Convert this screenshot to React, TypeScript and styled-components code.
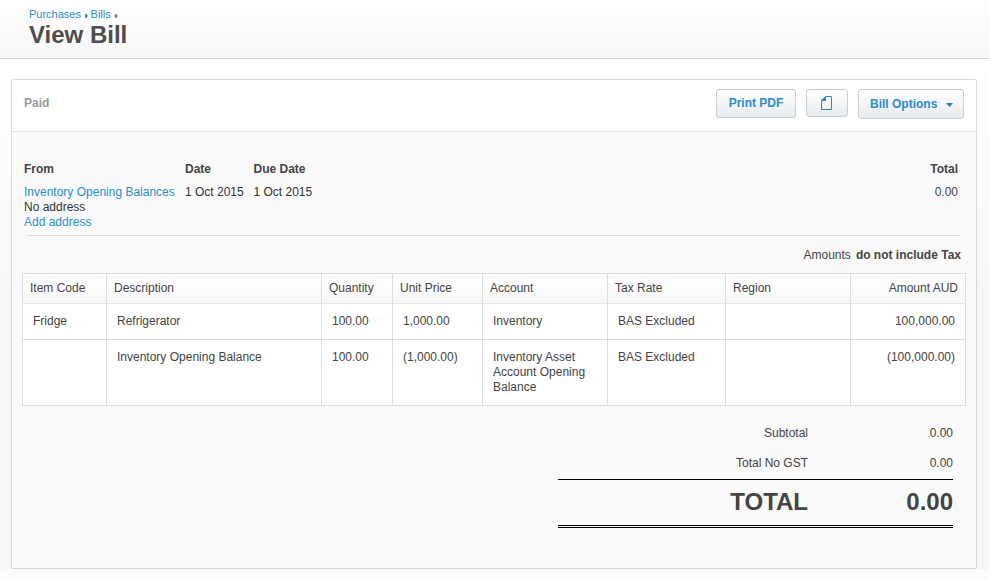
import React from "react";
import styled, { createGlobalStyle } from "styled-components";

const GlobalStyle = createGlobalStyle`
  * { box-sizing: border-box; }
  body {
    margin: 0;
    background: #fcfcfc;
    color: #444;
    font: 12px/15px "Liberation Sans", Arial, Helvetica, sans-serif;
  }
  h1, p { margin: 0; }
`;

const Page = styled.div`
  height: 580px;
  overflow: hidden;
`;

const Header = styled.header`
  height: 59px;
  padding: 7px 29px 0;
  border-bottom: 1px solid #d8d8d8;
  background: linear-gradient(#fff, #f7f7f7);
`;

const Breadcrumb = styled.nav`
  display: flex;
  align-items: center;
  height: 15px;
  font-size: 11px;
`;

const Chevron = styled.svg`
  width: 3px;
  height: 4px;
  margin: 2px 2.6px 0 4px;
  fill: #777;
`;

const Title = styled.h1`
  font-size: 24px;
  line-height: 26px;
  color: #4d4d4d;
`;

const Link = styled.a`
  color: #2a8fca;
  text-decoration: none;
  cursor: pointer;
`;

const Main = styled.main`
  height: 510px;
  padding: 20px 12px 0 11px;
  background: linear-gradient(#fff, #f7f7f7 240px);
`;

const Panel = styled.section`
  height: 490px;
  border: 1px solid #d9d9d9;
  border-radius: 3px 3px 0 0;
  background: #fafafa;
`;

const Toolbar = styled.div`
  display: flex;
  align-items: flex-start;
  height: 52px;
  padding: 9px 12px 0;
  border-bottom: 1px solid #e4e4e4;
  border-radius: 2px 2px 0 0;
  background: #fff;
`;

const Status = styled.strong`
  flex: 1;
  padding-top: 7px;
  color: #999;
`;

const Button = styled.button<{ $width: number; $height: number }>`
  display: flex;
  align-items: center;
  justify-content: center;
  width: ${(p) => p.$width}px;
  height: ${(p) => p.$height}px;
  margin-left: 10px;
  padding: 0 0 1px;
  border: 1px solid #c9cfd4;
  border-radius: 3px;
  background: linear-gradient(#fff, #e7ebee);
  color: #2a8fca;
  font: bold 12px/15px "Liberation Sans", Arial, sans-serif;
`;

const MenuButton = styled(Button)`
  justify-content: space-between;
  padding: 1px 10px 0 11px;
`;

const PageIcon = styled.svg`
  width: 11px;
  height: 14px;
  margin: 1px 1px 0 0;
`;

const Caret = styled.svg`
  width: 7px;
  height: 4px;
  margin-top: 1px;
  fill: #2a7fb5;
`;

const Summary = styled.div`
  display: grid;
  grid-template-columns: 161px 68.5px 1fr auto;
  row-gap: 8px;
  align-content: start;
  height: 104px;
  margin: 0 15px 0 12px;
  padding: 30px 3px 0 0;
`;

const Heading = styled.strong<{ $right?: boolean }>`
  text-align: ${(p) => (p.$right ? "right" : "left")};
`;

const Value = styled.div<{ $right?: boolean }>`
  color: ${(p) => (p.$right ? "#444" : "#333")};
  text-align: ${(p) => (p.$right ? "right" : "left")};
`;

const Divider = styled.div`
  height: 1px;
  margin: -1px 15px 0 15px;
  background: #ddd;
`;

const TaxNote = styled.p`
  display: flex;
  justify-content: flex-end;
  gap: 5px;
  height: 37px;
  padding: 12px 15px 0 0;
`;

const Table = styled.div`
  width: 944px;
  margin-left: 10px;
  border: solid #ddd;
  border-width: 1px 0 0 1px;
  background: #fff;
`;

const Row = styled.div<{ $height: number; $head?: boolean }>`
  display: grid;
  grid-template-columns: 84px 215px 71px 90px 125px 118px 125px 115px;
  height: ${(p) => p.$height}px;
  background: ${(p) => (p.$head ? "linear-gradient(#fff, #f8f8f8)" : "#fff")};
`;

const Cell = styled.div<{ $head?: boolean }>`
  padding: ${(p) => (p.$head ? "7px 7px" : "10px 10px")};
  border: solid #ddd;
  border-width: 0 1px 1px 0;
  border-bottom-color: ${(p) => (p.$head ? "#e6e6e6" : "#ddd")};

  &:last-child { text-align: right; }
`;

const Totals = styled.div`
  width: 395px;
  margin: 12px 0 0 546px;
`;

const TotalRow = styled.div<{ $grand?: boolean }>`
  display: grid;
  grid-template-columns: 250px 145px;
  align-items: center;
  height: ${(p) => (p.$grand ? 49 : 30)}px;
  margin-top: ${(p) => (p.$grand ? 1 : 0)}px;
  padding-bottom: ${(p) => (p.$grand ? 1 : 0)}px;
  border-top: ${(p) => (p.$grand ? "1px solid #000" : "0")};
  border-bottom: ${(p) => (p.$grand ? "3px double #000" : "0")};
  font-size: ${(p) => (p.$grand ? 24 : 12)}px;
  font-weight: ${(p) => (p.$grand ? "bold" : "normal")};
  line-height: ${(p) => (p.$grand ? 28 : 15)}px;
  text-align: right;
`;

const columns = ["Item Code", "Description", "Quantity", "Unit Price", "Account", "Tax Rate", "Region", "Amount AUD"];

const items = [
  { height: 36, cells: ["Fridge", "Refrigerator", "100.00", "1,000.00", "Inventory", "BAS Excluded", "", "100,000.00"] },
  {
    height: 66,
    cells: ["", "Inventory Opening Balance", "100.00", "(1,000.00)", "Inventory Asset Account Opening Balance", "BAS Excluded", "", "(100,000.00)"],
  },
];

function Separator() {
  return (
    <Chevron viewBox="0 0 3 4" aria-hidden="true">
      <path d="M0 0h1L3 2 1 4H0Z" />
    </Chevron>
  );
}

export default function App() {
  return (
    <Page>
      <GlobalStyle />
      <Header>
        <Breadcrumb>
          <Link>Purchases</Link>
          <Separator />
          <Link>Bills</Link>
          <Separator />
        </Breadcrumb>
        <Title>View Bill</Title>
      </Header>
      <Main>
        <Panel>
          <Toolbar>
            <Status>Paid</Status>
            <Button $width={80} $height={29}>Print PDF</Button>
            <Button $width={42} $height={28} aria-label="Files">
              <PageIcon viewBox="0 0 11 14" fill="none" stroke="#2a86be">
                <path d="M4.5.5h6v13H.5v-9z" />
                <path d="M4.5.5v4h-4z" fill="#2a86be" stroke="none" />
                <path d="M4.5 1v3.5H1" />
              </PageIcon>
            </Button>
            <MenuButton $width={106} $height={30}>
              Bill Options
              <Caret viewBox="0 0 7 4"><path d="M0 0h7L3.5 4z" /></Caret>
            </MenuButton>
          </Toolbar>
          <Summary>
            <Heading>From</Heading>
            <Heading>Date</Heading>
            <Heading>Due Date</Heading>
            <Heading $right>Total</Heading>
            <Value>
              <Link>Inventory Opening Balances</Link>
              <br />
              No address
              <br />
              <Link>Add address</Link>
            </Value>
            <Value>1 Oct 2015</Value>
            <Value>1 Oct 2015</Value>
            <Value $right>0.00</Value>
          </Summary>
          <Divider />
          <TaxNote>
            Amounts <strong>do not include Tax</strong>
          </TaxNote>
          <Table>
            <Row $height={30} $head>
              {columns.map((name) => <Cell key={name} $head>{name}</Cell>)}
            </Row>
            {items.map((item, index) => (
              <Row key={index} $height={item.height}>
                {item.cells.map((text, column) => <Cell key={column}>{text}</Cell>)}
              </Row>
            ))}
          </Table>
          <Totals>
            <TotalRow><span>Subtotal</span><span>0.00</span></TotalRow>
            <TotalRow><span>Total No GST</span><span>0.00</span></TotalRow>
            <TotalRow $grand><span>TOTAL</span><span>0.00</span></TotalRow>
          </Totals>
        </Panel>
      </Main>
    </Page>
  );
}
